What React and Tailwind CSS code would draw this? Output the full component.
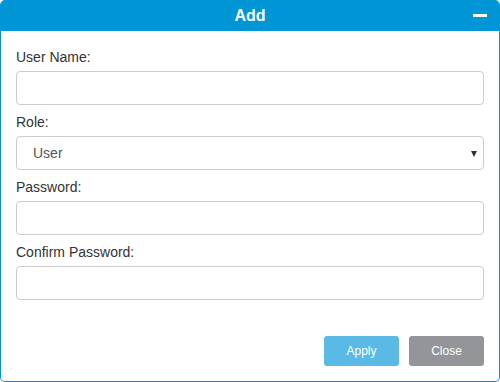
const Field = ({ label, children }) => (
  <div className="mb-[8px]">
    <div className="text-[14px] leading-[18px] mb-[5px] text-[#333]">{label}</div>
    {children}
  </div>
)

const inputClass =
  'block w-full h-[34px] rounded-[4px] border border-[#ccc] bg-white px-[12px] text-[14px] text-[#555] outline-none'

export default function App() {
  return (
    <div
      className="w-[500px] h-[382px] flex flex-col bg-white border border-t-0 border-[#0096d6] border-b-[#1b86bd] rounded-[5px] overflow-hidden"
      style={{ fontFamily: '"Liberation Sans", Arial, sans-serif' }}
    >
      {/* Header */}
      <div className="relative h-[31px] shrink-0 bg-[#0096d6] flex items-center justify-center">
        <span className="text-white font-bold text-[16px]">Add</span>
        <div className="absolute right-[12px] top-[14px] w-[14px] h-[3px] bg-white" />
      </div>

      {/* Form */}
      <div className="flex-1 flex flex-col px-[15px] pt-[17px]">
        <Field label="User Name:">
          <input type="text" className={inputClass} />
        </Field>
        <Field label="Role:">
          <div className="relative h-[34px] rounded-[4px] border border-[#ccc] bg-white flex items-center pl-[16px] text-[14px] text-[#555]">
            User
            <span className="absolute right-[6px] top-[14px] w-0 h-0 border-l-[3.5px] border-r-[3.5px] border-t-[6px] border-l-transparent border-r-transparent border-t-[#333]" />
          </div>
        </Field>
        <Field label="Password:">
          <input type="password" className={inputClass} />
        </Field>
        <Field label="Confirm Password:">
          <input type="password" className={inputClass} />
        </Field>

        <div className="mt-auto mb-[15px] flex justify-end gap-[10px]">
          <button className="w-[75px] h-[30px] rounded-[3px] bg-[#5bbae5] text-white text-[12px]">
            Apply
          </button>
          <button className="w-[75px] h-[30px] rounded-[3px] bg-[#939598] text-white text-[12px]">
            Close
          </button>
        </div>
      </div>
    </div>
  )
}
